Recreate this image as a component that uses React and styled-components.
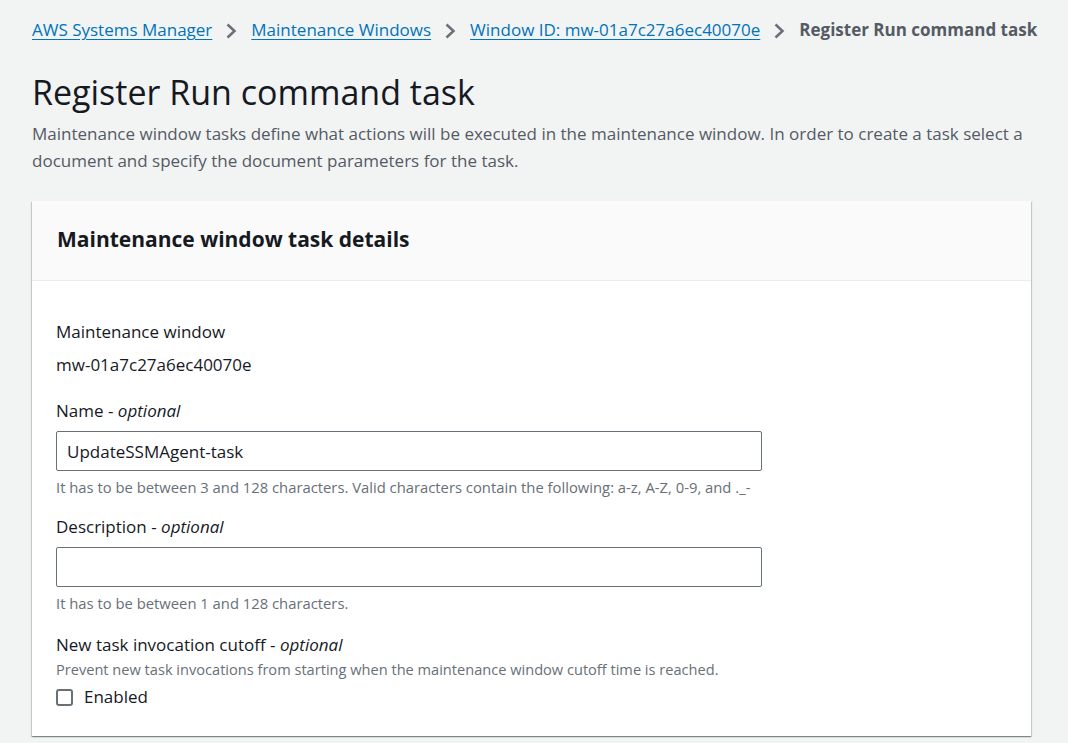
import styled, { createGlobalStyle } from "styled-components";

const GlobalStyle = createGlobalStyle`
  body {
    margin: 0;
    background: #f2f3f3;
    font-family: "Open Sans", "Noto Sans", Arial, sans-serif;
    color: #16191f;
  }
`;

const Page = styled.div`
  padding: 17px 32px 0 32px;
  min-height: 743px;
  box-sizing: border-box;
`;

const Crumbs = styled.nav`
  display: flex;
  align-items: center;
  gap: 13px;
  font-size: 17px;
  line-height: 26px;
  white-space: nowrap;
`;

const CrumbLink = styled.a`
  color: #0073bb;
  text-decoration: underline;
  text-underline-offset: 3px;
  cursor: pointer;
`;

const CrumbCurrent = styled.span`
  color: #545b64;
  font-weight: 700;
`;

const Sep = styled.svg`
  width: 13px;
  height: 18px;
  flex: none;
  margin-top: 1px;
`;

const Title = styled.h1`
  font-size: 34px;
  font-weight: 400;
  margin: 29px 0 0 0;
  line-height: 40px;
`;

const Lead = styled.p`
  font-size: 17px;
  line-height: 27px;
  color: #545b64;
  margin: 8px 0 0 0;
`;

const Card = styled.section`
  margin-top: 27px;
  width: 999px;
  background: #fff;
  box-shadow: 0 1px 1px 0 rgba(0, 28, 36, 0.3), 1px 1px 1px 0 rgba(0, 28, 36, 0.15),
    -1px 1px 1px 0 rgba(0, 28, 36, 0.15);
`;

const CardHeader = styled.header`
  background: #fafafa;
  border-bottom: 1px solid #eaeded;
  height: 79px;
  display: flex;
  align-items: center;
  padding: 0 25px;
`;

const CardTitle = styled.h2`
  margin: 0 0 3px 0;
  font-size: 21px;
  font-weight: 700;
`;

const CardBody = styled.div`
  padding: 39px 24px 27px 24px;
  display: flex;
  flex-direction: column;
`;

const Field = styled.div`
  display: flex;
  flex-direction: column;
  margin-top: ${(p) => p.$top || 0}px;
`;

const Label = styled.label`
  font-size: 17px;
  line-height: 24px;
  color: #16191f;
  em {
    font-style: italic;
  }
`;

const Value = styled.div`
  font-size: 17px;
  line-height: 24px;
  margin-top: 9px;
`;

const Input = styled.input`
  width: 706px;
  height: 40px;
  box-sizing: border-box;
  margin-top: 8px;
  border: 1px solid #687078;
  border-radius: 2px;
  padding: 0 10px;
  font-family: inherit;
  font-size: 17px;
  color: #16191f;
  outline: none;
`;

const Hint = styled.div`
  font-size: ${(p) => p.$size || 14.8}px;
  line-height: 20px;
  color: #687078;
  margin-top: ${(p) => p.$top ?? 6}px;
`;

const CheckRow = styled.label`
  display: flex;
  align-items: center;
  gap: 11px;
  margin-top: 6px;
  font-size: 17px;
  line-height: 24px;
`;

const Box = styled.span`
  width: 17px;
  height: 17px;
  box-sizing: border-box;
  border: 2px solid #687078;
  border-radius: 3px;
  background: #fff;
  flex: none;
`;

const Chevron = () => (
  <Sep viewBox="0 0 13 18">
    <path d="M2.5 2.5l7 6.5-7 6.5" fill="none" stroke="#687078" strokeWidth="2.5" />
  </Sep>
);

export default function App() {
  return (
    <>
      <GlobalStyle />
      <Page>
        <Crumbs>
          <CrumbLink>AWS Systems Manager</CrumbLink>
          <Chevron />
          <CrumbLink>Maintenance Windows</CrumbLink>
          <Chevron />
          <CrumbLink>Window ID: mw-01a7c27a6ec40070e</CrumbLink>
          <Chevron />
          <CrumbCurrent>Register Run command task</CrumbCurrent>
        </Crumbs>
        <Title>Register Run command task</Title>
        <Lead>
          Maintenance window tasks define what actions will be executed in the maintenance window. In
          order to create a task select a document and specify the document parameters for the task.
        </Lead>
        <Card>
          <CardHeader>
            <CardTitle>Maintenance window task details</CardTitle>
          </CardHeader>
          <CardBody>
            <Field>
              <Label>Maintenance window</Label>
              <Value>mw-01a7c27a6ec40070e</Value>
            </Field>
            <Field $top={22}>
              <Label>
                Name - <em>optional</em>
              </Label>
              <Input defaultValue="UpdateSSMAgent-task" />
              <Hint>It has to be between 3 and 128 characters. Valid characters contain the following: a-z, A-Z, 0-9, and ._-</Hint>
            </Field>
            <Field $top={18}>
              <Label>
                Description - <em>optional</em>
              </Label>
              <Input />
              <Hint>It has to be between 1 and 128 characters.</Hint>
            </Field>
            <Field $top={20}>
              <Label>
                New task invocation cutoff - <em>optional</em>
              </Label>
              <Hint $top={2} $size={14.6}>
                Prevent new task invocations from starting when the maintenance window cutoff time is reached.
              </Hint>
              <CheckRow>
                <Box />
                Enabled
              </CheckRow>
            </Field>
          </CardBody>
        </Card>
      </Page>
    </>
  );
}
